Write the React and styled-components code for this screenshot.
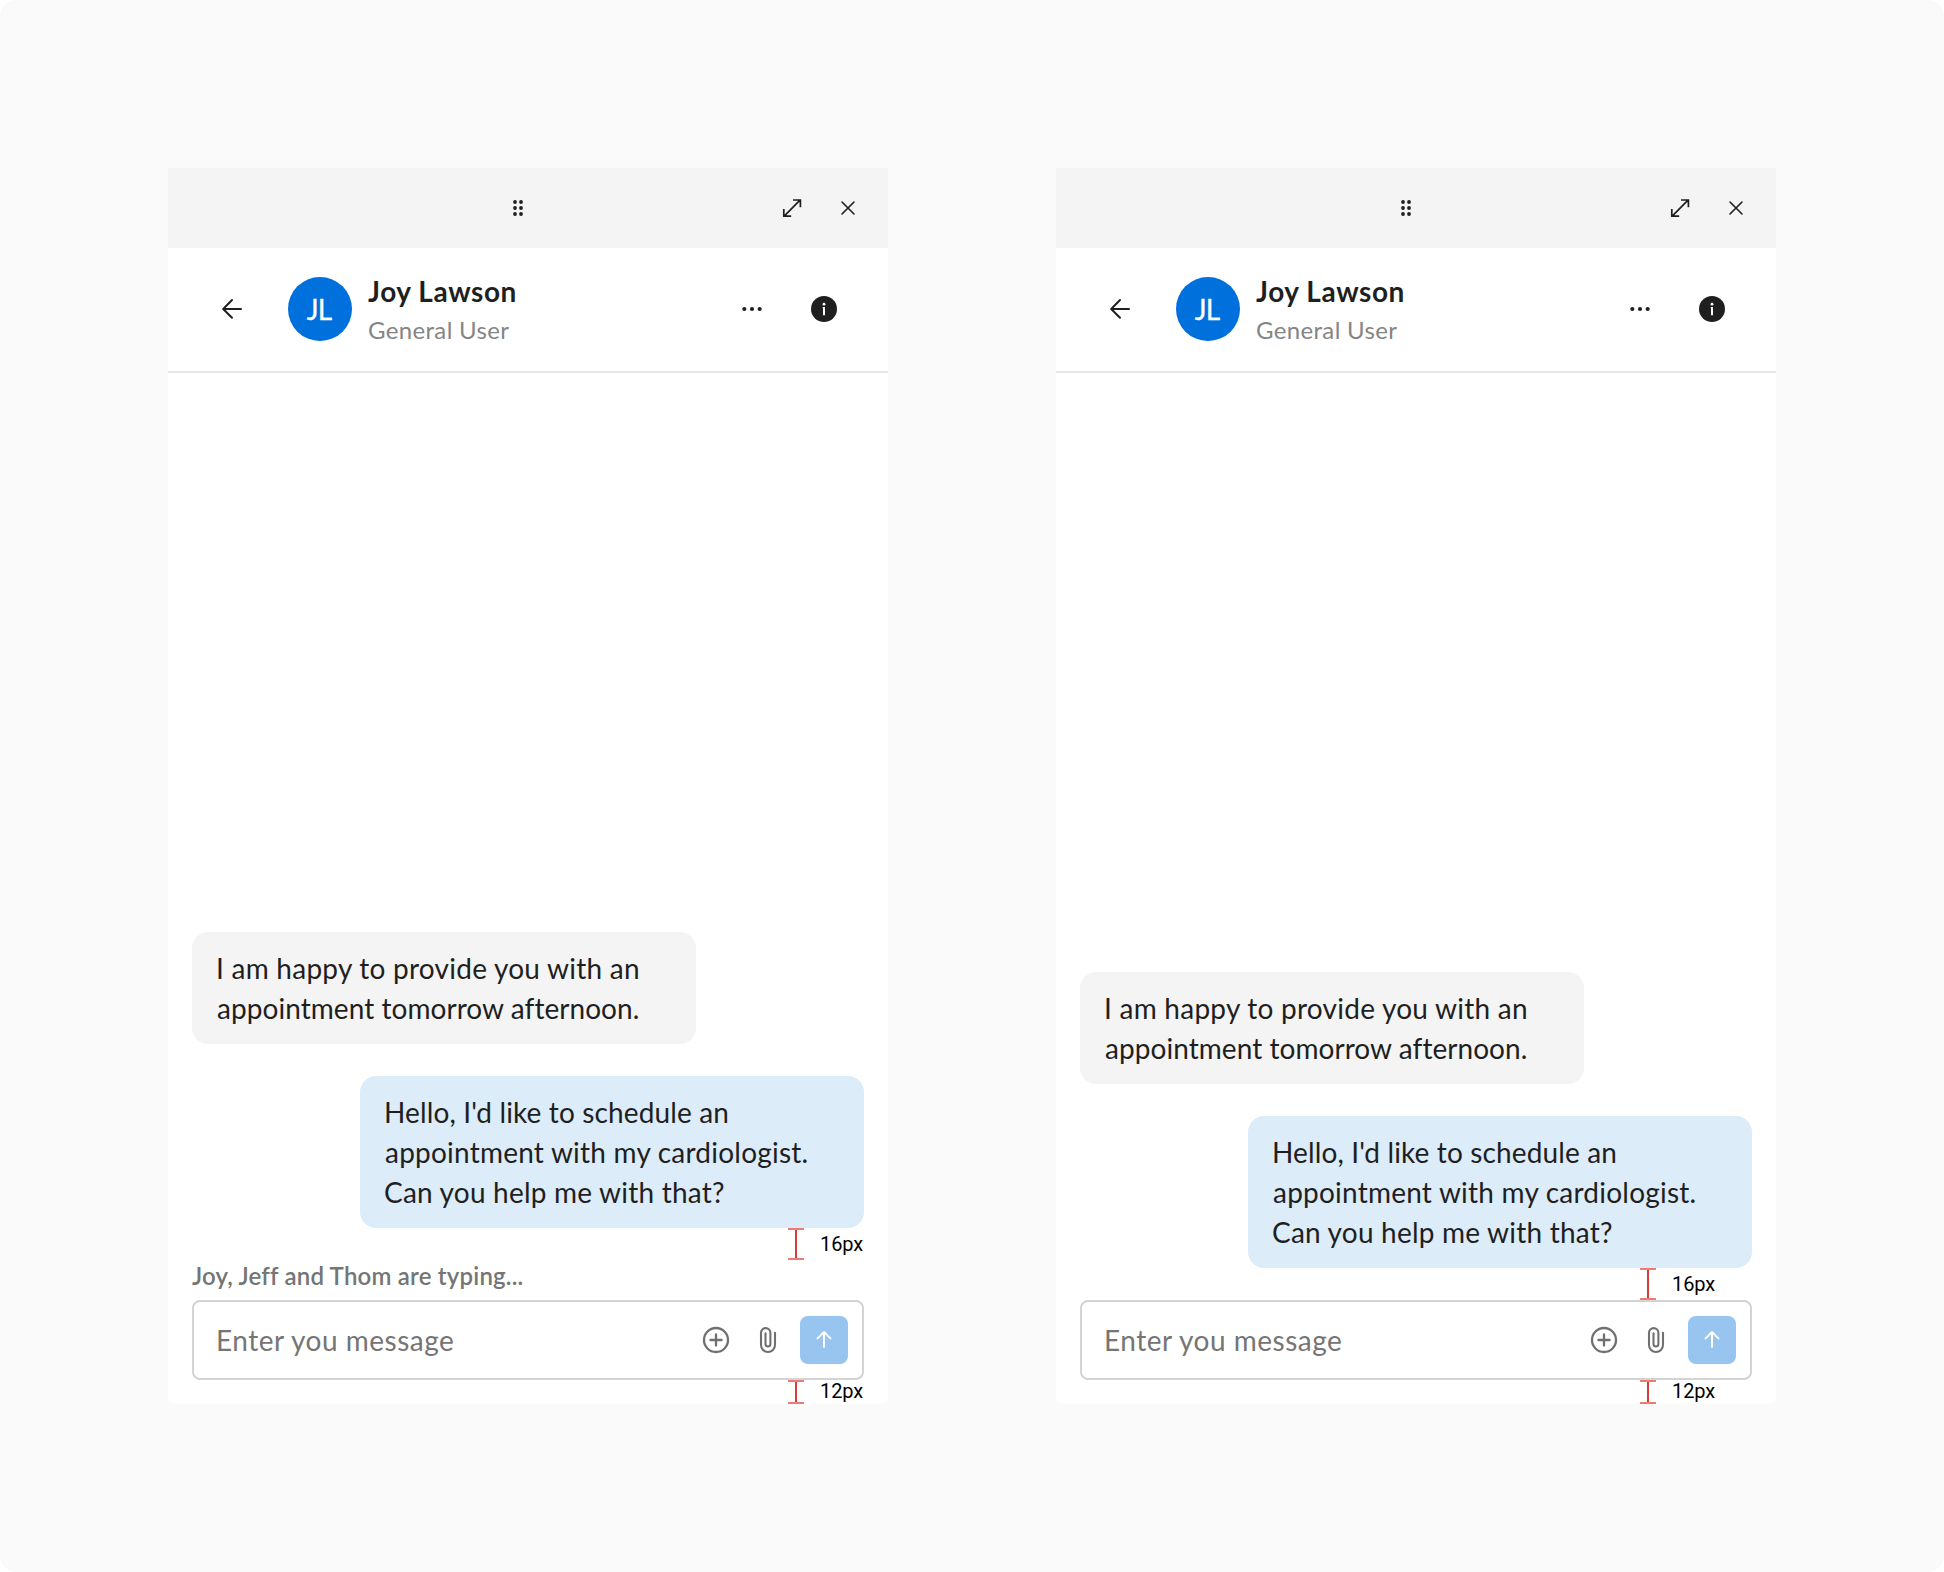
import React from 'react';
import styled, { createGlobalStyle } from 'styled-components';

const GlobalStyle = createGlobalStyle`
  * { box-sizing: border-box; }
  body { margin: 0; background: #fff; }
`;

const Page = styled.main`
  display: flex;
  align-items: flex-start;
  gap: 168px;
  width: 1944px;
  height: 1572px;
  padding: 168px;
  border-radius: 16px;
  background: #fafafa;
  color: #1f1f1f;
  font-family: Lato, 'Open Sans', sans-serif;
`;

const Panel = styled.section`
  display: flex;
  flex-direction: column;
  width: 720px;
  height: 1236px;
  border-radius: 2px 2px 8px 8px;
  overflow: hidden;
  background: #fff;
`;

const TitleBar = styled.div`
  display: grid;
  grid-template-columns: 1fr auto;
  align-items: center;
  height: 80px;
  padding: 0 24px 0 334px;
  background: #f4f4f4;
`;

const WindowActions = styled.div`
  display: flex;
  gap: 24px;
`;

const IconButton = styled.button`
  display: flex;
  align-items: center;
  justify-content: center;
  width: ${(p) => p.$size}px;
  height: ${(p) => p.$size}px;
  padding: 0;
  border: 0;
  border-radius: 8px;
  background: ${(p) => p.$fill || 'transparent'};
  color: ${(p) => p.$color || '#1f1f1f'};

  svg { display: block; flex: none; }
`;

const Header = styled.header`
  display: flex;
  align-items: center;
  height: 125px;
  padding: 0 48px 1px;
  border-bottom: 2px solid #e5e5e5;
`;

const Avatar = styled.div`
  display: flex;
  align-items: center;
  justify-content: center;
  width: 64px;
  height: 64px;
  margin: 0 16px 0 40px;
  padding-right: 2px;
  border-radius: 50%;
  background: #0070dd;
  color: #fff;
  font-size: 28px;
  line-height: 32px;
  letter-spacing: -0.8px;
  -webkit-text-stroke: 0.3px #fff;
`;

const Identity = styled.div`
  flex: 1;
  padding-bottom: 2px;
`;

const Name = styled.h1`
  margin: 0 0 3px;
  font-size: 28px;
  font-weight: 700;
  line-height: 40px;
  letter-spacing: 0.58px;
`;

const Role = styled.p`
  margin: 0;
  color: #858585;
  font-size: 24px;
  line-height: 32px;
  letter-spacing: 0.34px;
`;

const HeaderActions = styled.div`
  display: flex;
  gap: 40px;
`;

const Body = styled.div`
  display: flex;
  flex: 1;
  flex-direction: column;
  justify-content: flex-end;
  padding: 0 24px;
`;

const Messages = styled.div`
  display: flex;
  flex-direction: column;
  gap: 32px;
`;

const Bubble = styled.div`
  width: 504px;
  padding: 16px 24px;
  border-radius: 16px;
  align-self: ${(p) => (p.$own ? 'flex-end' : 'flex-start')};
  background: ${(p) => (p.$own ? '#dcecf9' : '#f4f4f4')};
`;

const Line = styled.span`
  display: block;
  padding-left: ${(p) => p.$indent || 0}px;
  font-size: 28px;
  line-height: 40px;
  white-space: nowrap;
  letter-spacing: ${(p) => p.$tracking}px;
`;

const SpacingRow = styled.div`
  display: flex;
  align-items: center;
  gap: 16px;
  height: ${(p) => p.$height}px;
  padding-left: ${(p) => p.$inset}px;
`;

const Ruler = styled.div`
  display: flex;
  justify-content: center;
  width: 16px;
  height: 100%;
  border: solid #ed7b70;
  border-width: 2px 0;

  &::after {
    content: '';
    width: 2px;
    background: #d93a3a;
  }
`;

const SpacingLabel = styled.span`
  color: #000;
  font: 400 20px/24px Roboto, sans-serif;
  letter-spacing: -0.1px;
  padding-bottom: ${(p) => p.$lift}px;
`;

const Typing = styled.div`
  height: 40px;
  color: #757575;
  font-size: 24px;
  font-weight: 600;
  line-height: 32px;
  letter-spacing: 0.2px;
`;

const Composer = styled.div`
  display: flex;
  align-items: center;
  height: 80px;
  padding: 0 14px 0 22px;
  border: 2px solid #d4d4d4;
  border-radius: 8px;
`;

const Placeholder = styled.span`
  flex: 1;
  color: #757575;
  font-size: 28px;
  line-height: 40px;
  letter-spacing: 0.5px;
`;

const ComposerActions = styled.div`
  display: flex;
  align-items: center;
  gap: 20px;

  & > :last-child { margin-left: -4px; }
`;

const Dots = ({ width, height, r, points }) => (
  <svg width={width} height={height} viewBox={`0 0 ${width} ${height}`} fill="#1f1f1f">
    {points.map(([x, y]) => <circle key={`${x}-${y}`} cx={x} cy={y} r={r} />)}
  </svg>
);

const DragIcon = () => (
  <Dots width={32} height={32} r={1.9} points={[[13, 10], [19, 10], [13, 16], [19, 16], [13, 22], [19, 22]]} />
);

const MoreIcon = () => (
  <Dots width={32} height={32} r={2.1} points={[[8.3, 16], [16, 16], [23.7, 16]]} />
);

const Stroke = ({ size = 32, width = 2, cap = 'round', d }) => (
  <svg width={size} height={size} viewBox={`0 0 ${size} ${size}`} fill="none" stroke="currentColor"
    strokeWidth={width} strokeLinecap={cap} strokeLinejoin={cap === 'round' ? 'round' : 'miter'}>
    <path d={d} />
  </svg>
);

const InfoIcon = () => (
  <svg width="32" height="32" viewBox="0 0 32 32">
    <circle cx="16" cy="16" r="13" fill="#1f1f1f" />
    <circle cx="16" cy="11.2" r="1.4" fill="#fff" />
    <path d="M14.7 14.1h2.3v8.2h-2v-7.2h-.3z" fill="#fff" />
  </svg>
);

function Spacing({ label, height, inset, lift }) {
  return (
    <SpacingRow $height={height} $inset={inset}>
      <Ruler />
      <SpacingLabel $lift={lift}>{label}</SpacingLabel>
    </SpacingRow>
  );
}

function ChatPanel({ typing, inset }) {
  return (
    <Panel>
      <TitleBar>
        <DragIcon />
        <WindowActions>
          <IconButton $size={32} aria-label="Expand">
            <Stroke width={1.7} cap="butt" d="M8.2 24.2 24 8.2M17 8H24.4V15.2M7.8 17V24.2H15.2" />
          </IconButton>
          <IconButton $size={32} aria-label="Close">
            <Stroke width={1.6} d="M10 10l12 12M22 10L10 22" />
          </IconButton>
        </WindowActions>
      </TitleBar>
      <Header>
        <IconButton $size={32} aria-label="Back">
          <Stroke d="M25 16H7.5M16 7L7.2 16L16 24.8" />
        </IconButton>
        <Avatar>JL</Avatar>
        <Identity>
          <Name>Joy Lawson</Name>
          <Role>General User</Role>
        </Identity>
        <HeaderActions>
          <IconButton $size={32} aria-label="More"><MoreIcon /></IconButton>
          <IconButton $size={32} aria-label="Info"><InfoIcon /></IconButton>
        </HeaderActions>
      </Header>
      <Body>
        <Messages>
          <Bubble>
            <Line $tracking={0.245}>I am happy to provide you with an</Line>
            <Line $tracking={0.054} $indent={1}>appointment tomorrow afternoon.</Line>
          </Bubble>
          <Bubble $own>
            <Line $tracking={0.13}>Hello, I'd like to schedule an</Line>
            <Line $tracking={0.22} $indent={1}>appointment with my cardiologist.</Line>
            <Line $tracking={0.21}>Can you help me with that?</Line>
          </Bubble>
        </Messages>
        <Spacing label="16px" height={32} inset={inset} lift={0} />
        {typing && <Typing>{typing}</Typing>}
        <Composer>
          <Placeholder>Enter you message</Placeholder>
          <ComposerActions>
            <IconButton $size={32} $color="#707070" aria-label="Add">
              <Stroke width={2.3} d="M28 16a12 12 0 1 1-24 0a12 12 0 1 1 24 0M16 10.4V21.6M10.4 16H21.6" />
            </IconButton>
            <IconButton $size={32} $color="#707070" aria-label="Attach">
              <Stroke width={2.1} d="M23 8.8V21a7 7 0 0 1-14 0V8.8a4.7 4.7 0 0 1 9.4 0V20a2.45 2.45 0 0 1-4.9 0V9.2" />
            </IconButton>
            <IconButton $size={48} $fill="#98c4f0" $color="#fff" aria-label="Send">
              <Stroke width={2} d="M16 23V8.2M9.6 14.4L16 8L22.4 14.4" />
            </IconButton>
          </ComposerActions>
        </Composer>
        <Spacing label="12px" height={24} inset={inset} lift={2} />
      </Body>
    </Panel>
  );
}

export default function App() {
  return (
    <>
      <GlobalStyle />
      <Page>
        <ChatPanel typing="Joy, Jeff and Thom are typing..." inset={596} />
        <ChatPanel inset={560} />
      </Page>
    </>
  );
}
